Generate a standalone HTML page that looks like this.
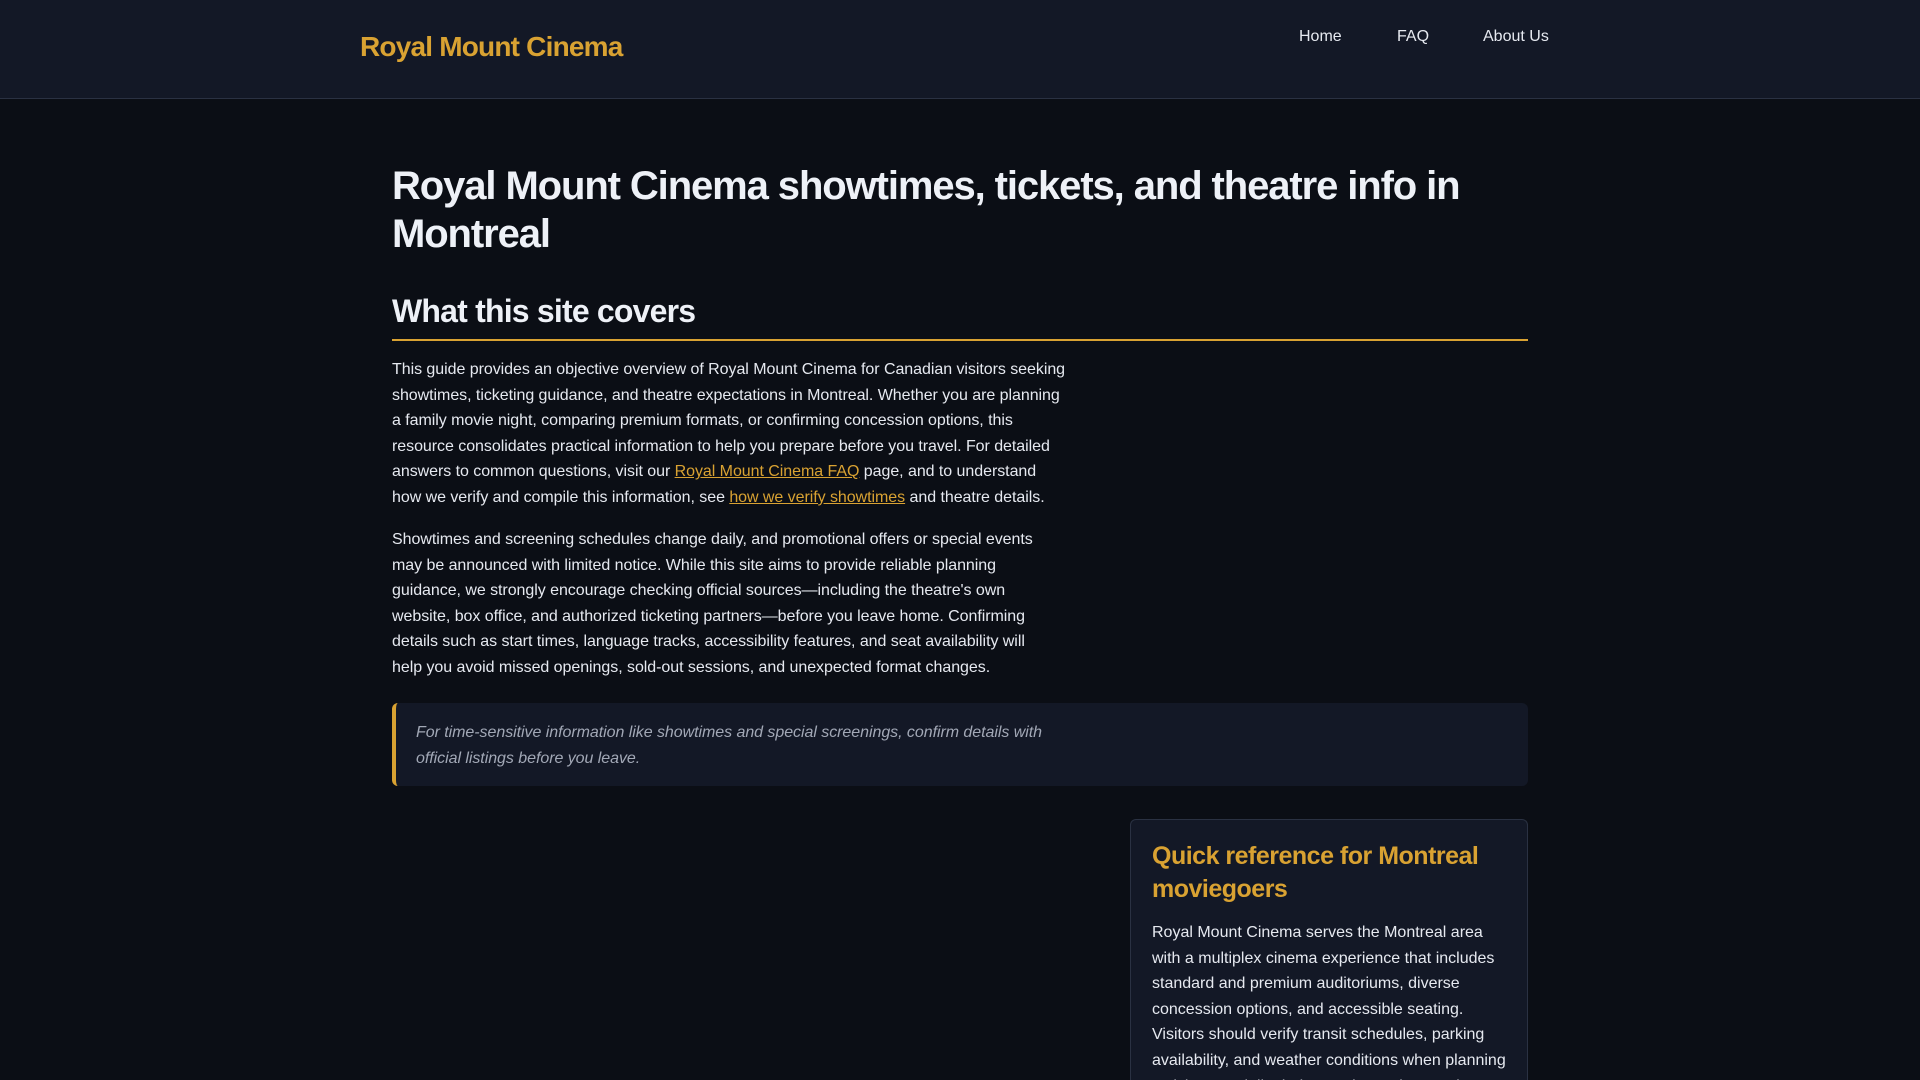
<!DOCTYPE html>
<html><head><meta charset="utf-8"><style>
*{margin:0;padding:0;box-sizing:border-box}
html,body{width:1920px;height:1080px;overflow:hidden}
body{position:relative;background:#0b0e15;font-family:"Liberation Sans",Arial,sans-serif;color:#e6e9f0}
header{position:absolute;left:0;top:0;width:1920px;height:99px;background:#131826;border-bottom:1px solid #2a3142}
.logo{position:absolute;left:360px;top:31px;font-size:28px;font-weight:bold;color:#d9a232;letter-spacing:-0.8px}
.nav{position:absolute;top:28px;font-size:16px;color:#e6e9f0}
.ab{position:absolute;left:392px;white-space:nowrap}
h1{position:absolute;left:392px;top:162px;font-size:40px;line-height:48px;font-weight:bold;letter-spacing:-1.1px;color:#eef1f7}
h2{position:absolute;left:392px;top:293px;font-size:32px;font-weight:bold;letter-spacing:-0.8px;color:#eef1f7}
.rule{position:absolute;left:392px;top:339px;width:1136px;height:2px;background:#d9a232}
p.t{font-size:16px;line-height:25.6px;color:#e6e9f0;letter-spacing:-0.05px}
a{color:#d9a232;text-decoration:underline}
.bq{position:absolute;left:392px;top:703px;width:1136px;height:83px;background:#131826;border-left:4px solid #d9a232;border-radius:6px}
.bq p{position:absolute;left:20px;top:17px;font-style:italic;color:#a2a8b6;font-size:16px;line-height:25.6px;letter-spacing:-0.05px;white-space:nowrap}
.card{position:absolute;left:1130px;top:819px;width:398px;height:261px;overflow:hidden;background:#131826;border:1px solid #2a3142;border-bottom:none;border-radius:6px 6px 0 0}
.card h3{position:absolute;left:21px;top:20px;font-size:25px;line-height:33px;color:#d9a232;font-weight:bold;letter-spacing:-0.5px;white-space:nowrap}
.card p{position:absolute;left:21px;top:100px;font-size:16px;line-height:25.6px;white-space:nowrap;letter-spacing:0}
</style></head><body>
<header>
<div class="logo">Royal Mount Cinema</div>
<div class="nav" style="left:1299px">Home</div>
<div class="nav" style="left:1397px">FAQ</div>
<div class="nav" style="left:1483px">About Us</div>
</header>
<h1>Royal Mount Cinema showtimes, tickets, and theatre info in<br>Montreal</h1>
<h2>What this site covers</h2>
<div class="rule"></div>
<p class="t ab" style="top:357px">This guide provides an objective overview of Royal Mount Cinema for Canadian visitors seeking<br>showtimes, ticketing guidance, and theatre expectations in Montreal. Whether you are planning<br>a family movie night, comparing premium formats, or confirming concession options, this<br>resource consolidates practical information to help you prepare before you travel. For detailed<br>answers to common questions, visit our <a>Royal Mount Cinema FAQ</a> page, and to understand<br>how we verify and compile this information, see <a>how we verify showtimes</a> and theatre details.</p>
<p class="t ab" style="top:527px">Showtimes and screening schedules change daily, and promotional offers or special events<br>may be announced with limited notice. While this site aims to provide reliable planning<br>guidance, we strongly encourage checking official sources—including the theatre's own<br>website, box office, and authorized ticketing partners—before you leave home. Confirming<br>details such as start times, language tracks, accessibility features, and seat availability will<br>help you avoid missed openings, sold-out sessions, and unexpected format changes.</p>
<div class="bq"><p>For time-sensitive information like showtimes and special screenings, confirm details with<br>official listings before you leave.</p></div>
<div class="card"><h3>Quick reference for Montreal<br>moviegoers</h3>
<p>Royal Mount Cinema serves the Montreal area<br>with a multiplex cinema experience that includes<br>standard and premium auditoriums, diverse<br>concession options, and accessible seating.<br>Visitors should verify transit schedules, parking<br>availability, and weather conditions when planning<br>a visit, especially during peak evenings and</p></div>
</body></html>
